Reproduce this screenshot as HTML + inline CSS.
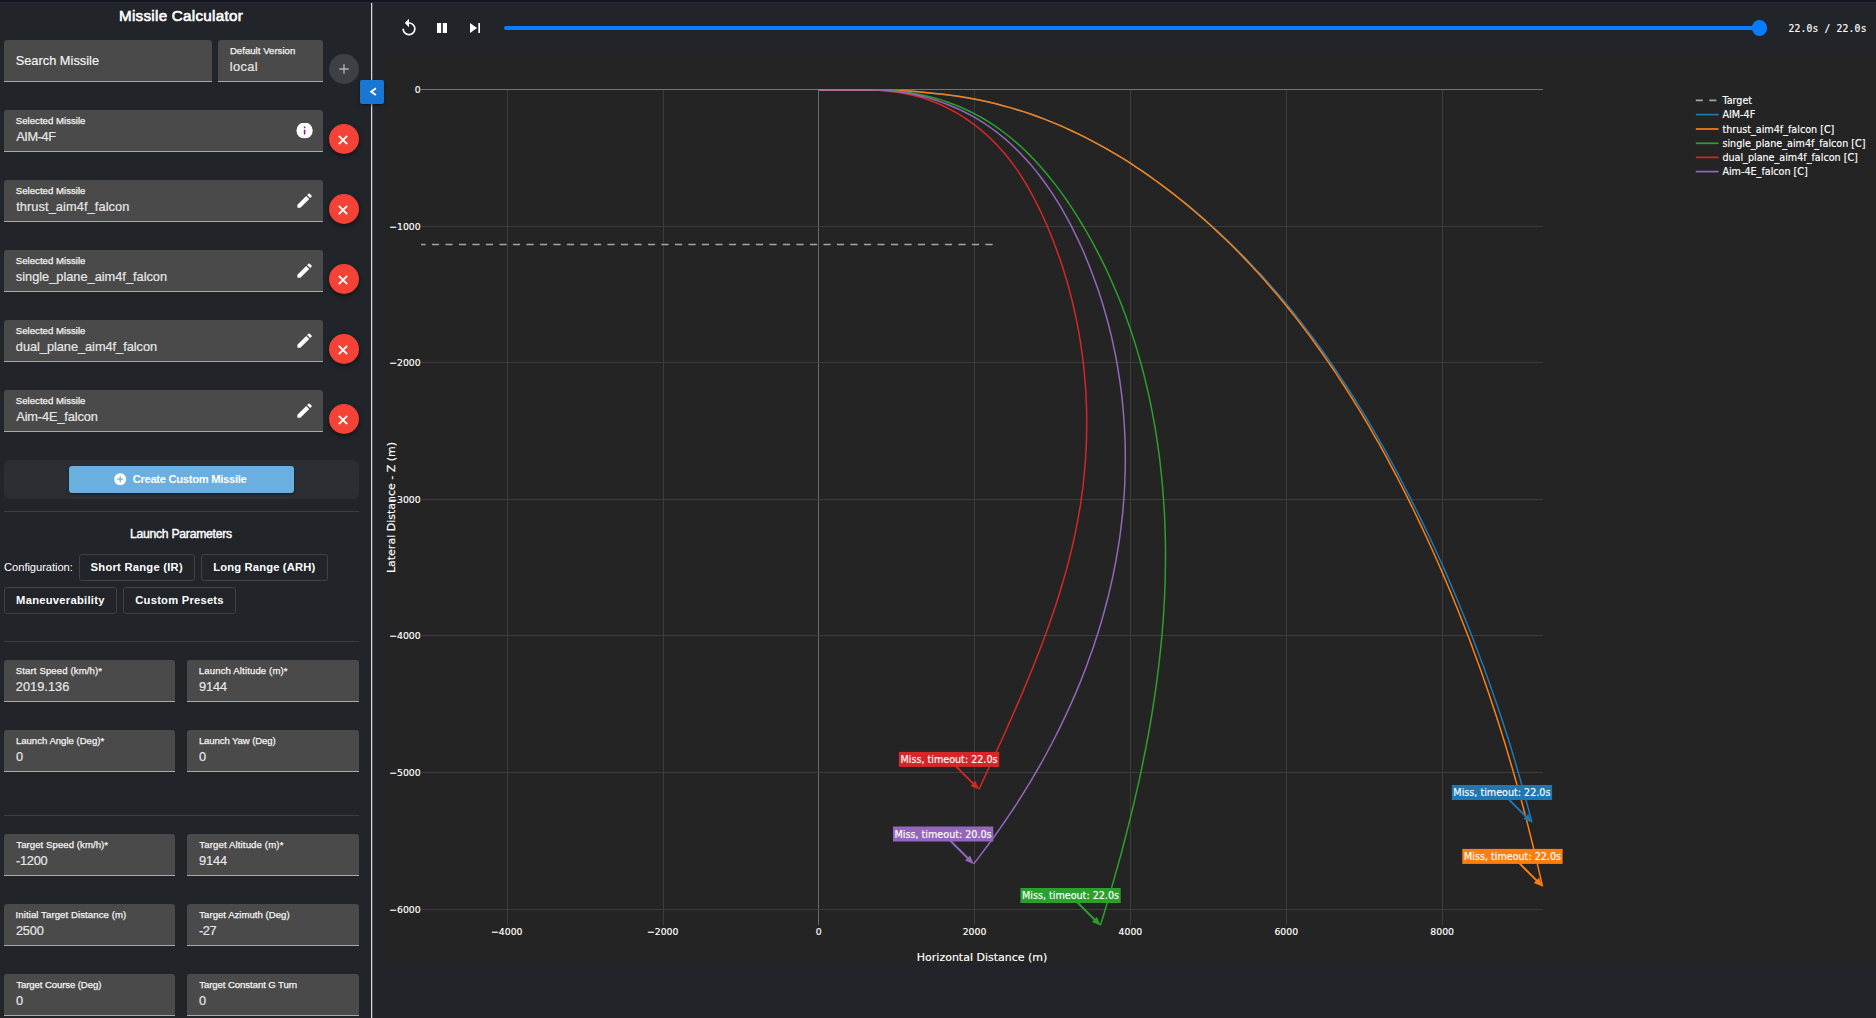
<!DOCTYPE html>
<html lang="en"><head><meta charset="utf-8"><title>Missile Calculator</title><style>
html,body{margin:0;padding:0;background:#212429;}
body{width:1876px;height:1018px;position:relative;overflow:hidden;font-family:'Liberation Sans', Arial, sans-serif;}
.b{position:absolute;display:block}
.t{position:absolute;white-space:pre;line-height:20px;height:20px}
.f{position:absolute;background:#4a4a4a;border-radius:3px 3px 0 0;box-sizing:border-box;border-bottom:1px solid #a9a9a9}
.fab{box-shadow:0 2px 4px rgba(0,0,0,.45)}
svg text{stroke:#fff;stroke-width:.15px}
</style></head><body>
<span class="t " id="t0" style="left:118.97px;top:6.33px;font-size:15.2px;color:#fff;font-weight:400;letter-spacing:0.283px;font-family:'Liberation Sans', Arial, sans-serif;-webkit-text-stroke:0.6px #fff;">Missile Calculator</span>
<div class="f" style="left:4px;top:40px;width:208px;height:42px"></div>
<span class="t " id="t1" style="left:15.65px;top:50.86px;font-size:12.8px;color:#f6f6f6;font-weight:400;letter-spacing:0.018px;font-family:'Liberation Sans', Arial, sans-serif;-webkit-text-stroke:0.15px #f6f6f6;">Search Missile</span>
<div class="f" style="left:218px;top:40px;width:105px;height:42px"></div>
<span class="t lab" id="t2" style="left:229.91px;top:40.67px;font-size:9.6px;color:#f4f4f4;font-weight:400;letter-spacing:0.023px;font-family:'Liberation Sans', Arial, sans-serif;-webkit-text-stroke:0.25px #f4f4f4;">Default Version</span>
<span class="t " id="t3" style="left:229.64px;top:56.66px;font-size:12.8px;color:#e6e6e6;font-weight:400;letter-spacing:0.408px;font-family:'Liberation Sans', Arial, sans-serif;-webkit-text-stroke:0.2px #e6e6e6;">local</span>
<div class="b" style="left:328.8px;top:54px;width:30px;height:30px;border-radius:50%;background:#3d4044"></div>
<svg class="b" style="left:335.8px;top:61.05px" width="16" height="16" viewBox="0 0 24 24"><path fill="#b2b4b6" d="M19 13h-6v6h-2v-6H5v-2h6V5h2v6h6v2z"/></svg>
<div class="f" style="left:4px;top:110px;width:319px;height:42px"></div>
<span class="t lab" id="t4" style="left:15.82px;top:110.67px;font-size:9.6px;color:#f4f4f4;font-weight:400;letter-spacing:0.019px;font-family:'Liberation Sans', Arial, sans-serif;-webkit-text-stroke:0.25px #f4f4f4;">Selected Missile</span>
<span class="t " id="t5" style="left:16.24px;top:126.66px;font-size:12.8px;color:#e6e6e6;font-weight:400;letter-spacing:-0.443px;font-family:'Liberation Sans', Arial, sans-serif;-webkit-text-stroke:0.2px #e6e6e6;">AIM-4F</span>
<svg class="b" style="left:295.1px;top:121.4px" width="19.2" height="19.2" viewBox="0 0 24 24"><clipPath id="ic"><rect x="0" y="2.45" width="24" height="19.1"/></clipPath><circle cx="12" cy="12" r="10.2" fill="#fff" clip-path="url(#ic)"/><path fill="#86208f" d="M11 7h2v2h-2zM11 11h2v6h-2z"/></svg>
<div class="b fab" style="left:328.9px;top:123.9px;width:30.2px;height:30.2px;border-radius:50%;background:#f44336"></div>
<svg class="b" style="left:333.4px;top:129.5px" width="20" height="20" viewBox="-10 -10 20 20"><path fill="none" stroke="#fff" stroke-width="1.85" d="M-4.15,-4.05L4.15,4.05M4.15,-4.05L-4.15,4.05"/></svg>
<div class="f" style="left:4px;top:180px;width:319px;height:42px"></div>
<span class="t lab" id="t6" style="left:15.82px;top:180.67px;font-size:9.6px;color:#f4f4f4;font-weight:400;letter-spacing:0.019px;font-family:'Liberation Sans', Arial, sans-serif;-webkit-text-stroke:0.25px #f4f4f4;">Selected Missile</span>
<span class="t " id="t7" style="left:16.15px;top:196.66px;font-size:12.8px;color:#e6e6e6;font-weight:400;letter-spacing:0.086px;font-family:'Liberation Sans', Arial, sans-serif;-webkit-text-stroke:0.2px #e6e6e6;">thrust_aim4f_falcon</span>
<svg class="b" style="left:294.95px;top:191.3px" width="19.2" height="19.2" viewBox="0 0 24 24"><path fill="#fff" d="M3 17.25V21h3.75L17.81 9.94l-3.75-3.75L3 17.25zM20.71 7.04c.39-.39.39-1.02 0-1.41l-2.34-2.34c-.39-.39-1.02-.39-1.41 0l-1.83 1.83 3.75 3.75 1.83-1.83z"/></svg>
<div class="b fab" style="left:328.9px;top:193.9px;width:30.2px;height:30.2px;border-radius:50%;background:#f44336"></div>
<svg class="b" style="left:333.4px;top:199.5px" width="20" height="20" viewBox="-10 -10 20 20"><path fill="none" stroke="#fff" stroke-width="1.85" d="M-4.15,-4.05L4.15,4.05M4.15,-4.05L-4.15,4.05"/></svg>
<div class="f" style="left:4px;top:250px;width:319px;height:42px"></div>
<span class="t lab" id="t8" style="left:15.82px;top:250.67px;font-size:9.6px;color:#f4f4f4;font-weight:400;letter-spacing:0.019px;font-family:'Liberation Sans', Arial, sans-serif;-webkit-text-stroke:0.25px #f4f4f4;">Selected Missile</span>
<span class="t " id="t9" style="left:15.86px;top:266.66px;font-size:12.8px;color:#e6e6e6;font-weight:400;letter-spacing:-0.014px;font-family:'Liberation Sans', Arial, sans-serif;-webkit-text-stroke:0.2px #e6e6e6;">single_plane_aim4f_falcon</span>
<svg class="b" style="left:294.95px;top:261.3px" width="19.2" height="19.2" viewBox="0 0 24 24"><path fill="#fff" d="M3 17.25V21h3.75L17.81 9.94l-3.75-3.75L3 17.25zM20.71 7.04c.39-.39.39-1.02 0-1.41l-2.34-2.34c-.39-.39-1.02-.39-1.41 0l-1.83 1.83 3.75 3.75 1.83-1.83z"/></svg>
<div class="b fab" style="left:328.9px;top:263.9px;width:30.2px;height:30.2px;border-radius:50%;background:#f44336"></div>
<svg class="b" style="left:333.4px;top:269.5px" width="20" height="20" viewBox="-10 -10 20 20"><path fill="none" stroke="#fff" stroke-width="1.85" d="M-4.15,-4.05L4.15,4.05M4.15,-4.05L-4.15,4.05"/></svg>
<div class="f" style="left:4px;top:320px;width:319px;height:42px"></div>
<span class="t lab" id="t10" style="left:15.82px;top:320.67px;font-size:9.6px;color:#f4f4f4;font-weight:400;letter-spacing:0.019px;font-family:'Liberation Sans', Arial, sans-serif;-webkit-text-stroke:0.25px #f4f4f4;">Selected Missile</span>
<span class="t " id="t11" style="left:15.85px;top:336.66px;font-size:12.8px;color:#e6e6e6;font-weight:400;letter-spacing:-0.049px;font-family:'Liberation Sans', Arial, sans-serif;-webkit-text-stroke:0.2px #e6e6e6;">dual_plane_aim4f_falcon</span>
<svg class="b" style="left:294.95px;top:331.3px" width="19.2" height="19.2" viewBox="0 0 24 24"><path fill="#fff" d="M3 17.25V21h3.75L17.81 9.94l-3.75-3.75L3 17.25zM20.71 7.04c.39-.39.39-1.02 0-1.41l-2.34-2.34c-.39-.39-1.02-.39-1.41 0l-1.83 1.83 3.75 3.75 1.83-1.83z"/></svg>
<div class="b fab" style="left:328.9px;top:333.9px;width:30.2px;height:30.2px;border-radius:50%;background:#f44336"></div>
<svg class="b" style="left:333.4px;top:339.5px" width="20" height="20" viewBox="-10 -10 20 20"><path fill="none" stroke="#fff" stroke-width="1.85" d="M-4.15,-4.05L4.15,4.05M4.15,-4.05L-4.15,4.05"/></svg>
<div class="f" style="left:4px;top:390px;width:319px;height:42px"></div>
<span class="t lab" id="t12" style="left:15.82px;top:390.67px;font-size:9.6px;color:#f4f4f4;font-weight:400;letter-spacing:0.019px;font-family:'Liberation Sans', Arial, sans-serif;-webkit-text-stroke:0.25px #f4f4f4;">Selected Missile</span>
<span class="t " id="t13" style="left:16.24px;top:406.66px;font-size:12.8px;color:#e6e6e6;font-weight:400;letter-spacing:-0.133px;font-family:'Liberation Sans', Arial, sans-serif;-webkit-text-stroke:0.2px #e6e6e6;">Aim-4E_falcon</span>
<svg class="b" style="left:294.95px;top:401.3px" width="19.2" height="19.2" viewBox="0 0 24 24"><path fill="#fff" d="M3 17.25V21h3.75L17.81 9.94l-3.75-3.75L3 17.25zM20.71 7.04c.39-.39.39-1.02 0-1.41l-2.34-2.34c-.39-.39-1.02-.39-1.41 0l-1.83 1.83 3.75 3.75 1.83-1.83z"/></svg>
<div class="b fab" style="left:328.9px;top:403.9px;width:30.2px;height:30.2px;border-radius:50%;background:#f44336"></div>
<svg class="b" style="left:333.4px;top:409.5px" width="20" height="20" viewBox="-10 -10 20 20"><path fill="none" stroke="#fff" stroke-width="1.85" d="M-4.15,-4.05L4.15,4.05M4.15,-4.05L-4.15,4.05"/></svg>
<div class="b" style="left:4px;top:460px;width:355px;height:39px;background:#2b2e33;border-radius:6px"></div>
<div class="b" style="left:69px;top:466px;width:225px;height:27px;background:#6aafe0;border-radius:3px;box-shadow:0 1px 3px rgba(0,0,0,.4)"></div>
<svg class="b" style="left:112.8px;top:471.8px" width="14.4" height="14.4" viewBox="0 0 24 24"><path fill="#fff" d="M12 2C6.48 2 2 6.48 2 12s4.480 10 10 10 10-4.480 10-10S17.520 2 12 2zm5 11h-4v4h-2v-4H7v-2h4V7h2v4h4v2z"/></svg>
<span class="t " id="t14" style="left:132.65px;top:468.72px;font-size:11.2px;color:#fff;font-weight:700;letter-spacing:-0.295px;font-family:'Liberation Sans', Arial, sans-serif;">Create Custom Missile</span>
<div class="b" style="left:4px;top:511px;width:355px;height:1px;background:#3a3d42"></div>
<span class="t " id="t15" style="left:129.90px;top:523.77px;font-size:12.2px;color:#fff;font-weight:400;letter-spacing:-0.258px;font-family:'Liberation Sans', Arial, sans-serif;-webkit-text-stroke:0.4px #fff;">Launch Parameters</span>
<span class="t " id="t16" style="left:4.10px;top:557.32px;font-size:11.2px;color:#fff;font-weight:400;letter-spacing:-0.074px;font-family:'Liberation Sans', Arial, sans-serif;">Configuration:</span>
<div class="b" style="left:79px;top:554px;width:116px;height:27px;border:1px solid #3f4247;border-radius:3px;box-sizing:border-box"></div>
<span class="t " id="t17" style="left:90.58px;top:557.32px;font-size:11.2px;color:#fff;font-weight:700;letter-spacing:0.254px;font-family:'Liberation Sans', Arial, sans-serif;">Short Range (IR)</span>
<div class="b" style="left:201px;top:554px;width:127px;height:27px;border:1px solid #3f4247;border-radius:3px;box-sizing:border-box"></div>
<span class="t " id="t18" style="left:213.34px;top:557.32px;font-size:11.2px;color:#fff;font-weight:700;letter-spacing:0.157px;font-family:'Liberation Sans', Arial, sans-serif;">Long Range (ARH)</span>
<div class="b" style="left:4px;top:587px;width:113px;height:27px;border:1px solid #3f4247;border-radius:3px;box-sizing:border-box"></div>
<span class="t " id="t19" style="left:16.08px;top:590.22px;font-size:11.2px;color:#fff;font-weight:700;letter-spacing:0.267px;font-family:'Liberation Sans', Arial, sans-serif;">Maneuverability</span>
<div class="b" style="left:123px;top:587px;width:113px;height:27px;border:1px solid #3f4247;border-radius:3px;box-sizing:border-box"></div>
<span class="t " id="t20" style="left:135.29px;top:590.22px;font-size:11.2px;color:#fff;font-weight:700;letter-spacing:0.237px;font-family:'Liberation Sans', Arial, sans-serif;">Custom Presets</span>
<div class="b" style="left:4px;top:641px;width:355px;height:1px;background:#3a3d42"></div>
<div class="f" style="left:4px;top:660px;width:171px;height:42px"></div>
<span class="t lab" id="t21" style="left:15.83px;top:660.67px;font-size:9.6px;color:#f4f4f4;font-weight:400;letter-spacing:0.110px;font-family:'Liberation Sans', Arial, sans-serif;-webkit-text-stroke:0.25px #f4f4f4;">Start Speed (km/h)*</span>
<span class="t " id="t22" style="left:15.85px;top:676.66px;font-size:12.8px;color:#e6e6e6;font-weight:400;letter-spacing:0.015px;font-family:'Liberation Sans', Arial, sans-serif;-webkit-text-stroke:0.2px #e6e6e6;">2019.136</span>
<div class="f" style="left:187px;top:660px;width:172px;height:42px"></div>
<span class="t lab" id="t23" style="left:198.83px;top:660.67px;font-size:9.6px;color:#f4f4f4;font-weight:400;letter-spacing:0.125px;font-family:'Liberation Sans', Arial, sans-serif;-webkit-text-stroke:0.25px #f4f4f4;">Launch Altitude (m)*</span>
<span class="t " id="t24" style="left:198.89px;top:676.66px;font-size:12.8px;color:#e6e6e6;font-weight:400;letter-spacing:-0.035px;font-family:'Liberation Sans', Arial, sans-serif;-webkit-text-stroke:0.2px #e6e6e6;">9144</span>
<div class="f" style="left:4px;top:730px;width:171px;height:42px"></div>
<span class="t lab" id="t25" style="left:15.88px;top:730.67px;font-size:9.6px;color:#f4f4f4;font-weight:400;letter-spacing:-0.014px;font-family:'Liberation Sans', Arial, sans-serif;-webkit-text-stroke:0.25px #f4f4f4;">Launch Angle (Deg)*</span>
<span class="t " id="t26" style="left:15.99px;top:746.66px;font-size:12.8px;color:#e6e6e6;font-weight:400;letter-spacing:-5.376px;font-family:'Liberation Sans', Arial, sans-serif;-webkit-text-stroke:0.2px #e6e6e6;">0</span>
<div class="f" style="left:187px;top:730px;width:172px;height:42px"></div>
<span class="t lab" id="t27" style="left:198.88px;top:730.67px;font-size:9.6px;color:#f4f4f4;font-weight:400;letter-spacing:-0.119px;font-family:'Liberation Sans', Arial, sans-serif;-webkit-text-stroke:0.25px #f4f4f4;">Launch Yaw (Deg)</span>
<span class="t " id="t28" style="left:198.99px;top:746.66px;font-size:12.8px;color:#e6e6e6;font-weight:400;letter-spacing:-5.376px;font-family:'Liberation Sans', Arial, sans-serif;-webkit-text-stroke:0.2px #e6e6e6;">0</span>
<div class="f" style="left:4px;top:834px;width:171px;height:42px"></div>
<span class="t lab" id="t29" style="left:16.29px;top:834.67px;font-size:9.6px;color:#f4f4f4;font-weight:400;letter-spacing:0.062px;font-family:'Liberation Sans', Arial, sans-serif;-webkit-text-stroke:0.25px #f4f4f4;">Target Speed (km/h)*</span>
<span class="t " id="t30" style="left:15.89px;top:850.66px;font-size:12.8px;color:#e6e6e6;font-weight:400;letter-spacing:-0.223px;font-family:'Liberation Sans', Arial, sans-serif;-webkit-text-stroke:0.2px #e6e6e6;">-1200</span>
<div class="f" style="left:187px;top:834px;width:172px;height:42px"></div>
<span class="t lab" id="t31" style="left:199.29px;top:834.67px;font-size:9.6px;color:#f4f4f4;font-weight:400;letter-spacing:0.132px;font-family:'Liberation Sans', Arial, sans-serif;-webkit-text-stroke:0.25px #f4f4f4;">Target Altitude (m)*</span>
<span class="t " id="t32" style="left:198.89px;top:850.66px;font-size:12.8px;color:#e6e6e6;font-weight:400;letter-spacing:-0.097px;font-family:'Liberation Sans', Arial, sans-serif;-webkit-text-stroke:0.2px #e6e6e6;">9144</span>
<div class="f" style="left:4px;top:904px;width:171px;height:42px"></div>
<span class="t lab" id="t33" style="left:15.60px;top:904.67px;font-size:9.6px;color:#f4f4f4;font-weight:400;letter-spacing:0.080px;font-family:'Liberation Sans', Arial, sans-serif;-webkit-text-stroke:0.25px #f4f4f4;">Initial Target Distance (m)</span>
<span class="t " id="t34" style="left:15.89px;top:920.66px;font-size:12.8px;color:#e6e6e6;font-weight:400;letter-spacing:-0.152px;font-family:'Liberation Sans', Arial, sans-serif;-webkit-text-stroke:0.2px #e6e6e6;">2500</span>
<div class="f" style="left:187px;top:904px;width:172px;height:42px"></div>
<span class="t lab" id="t35" style="left:199.29px;top:904.67px;font-size:9.6px;color:#f4f4f4;font-weight:400;letter-spacing:0.011px;font-family:'Liberation Sans', Arial, sans-serif;-webkit-text-stroke:0.25px #f4f4f4;">Target Azimuth (Deg)</span>
<span class="t " id="t36" style="left:198.90px;top:920.66px;font-size:12.8px;color:#e6e6e6;font-weight:400;letter-spacing:-0.446px;font-family:'Liberation Sans', Arial, sans-serif;-webkit-text-stroke:0.2px #e6e6e6;">-27</span>
<div class="f" style="left:4px;top:974px;width:171px;height:42px"></div>
<span class="t lab" id="t37" style="left:16.29px;top:974.67px;font-size:9.6px;color:#f4f4f4;font-weight:400;letter-spacing:-0.103px;font-family:'Liberation Sans', Arial, sans-serif;-webkit-text-stroke:0.25px #f4f4f4;">Target Course (Deg)</span>
<span class="t " id="t38" style="left:15.99px;top:990.66px;font-size:12.8px;color:#e6e6e6;font-weight:400;letter-spacing:-5.376px;font-family:'Liberation Sans', Arial, sans-serif;-webkit-text-stroke:0.2px #e6e6e6;">0</span>
<div class="f" style="left:187px;top:974px;width:172px;height:42px"></div>
<span class="t lab" id="t39" style="left:199.29px;top:974.67px;font-size:9.6px;color:#f4f4f4;font-weight:400;letter-spacing:-0.087px;font-family:'Liberation Sans', Arial, sans-serif;-webkit-text-stroke:0.25px #f4f4f4;">Target Constant G Turn</span>
<span class="t " id="t40" style="left:198.99px;top:990.66px;font-size:12.8px;color:#e6e6e6;font-weight:400;letter-spacing:-5.376px;font-family:'Liberation Sans', Arial, sans-serif;-webkit-text-stroke:0.2px #e6e6e6;">0</span>
<div class="b" style="left:4px;top:814.5px;width:355px;height:1px;background:#3a3d42"></div>
<div class="b" style="left:371px;top:3px;width:1px;height:1015px;background:#d6d6d6"></div>
<div class="b" style="left:372px;top:3px;width:1px;height:1015px;background:#505256"></div>
<div class="b" style="left:0px;top:0px;width:1876px;height:2px;background:#121420"></div>
<div class="b" style="left:0px;top:2px;width:1876px;height:1px;background:#262935"></div>
<svg class="b" style="left:399px;top:18px" width="20" height="20" viewBox="0 0 24 24"><path fill="#fff" d="M12 5V1L7 6l5 5V7c3.31 0 6 2.69 6 6s-2.69 6-6 6-6-2.69-6-6H4c0 4.42 3.58 8 8 8s8-3.58 8-8-3.58-8-8-8z"/></svg>
<svg class="b" style="left:432px;top:18px" width="20" height="20" viewBox="0 0 24 24"><path fill="#fff" d="M6 6h5v12H6zM13 6h5v12h-5z"/></svg>
<svg class="b" style="left:465px;top:18px" width="20" height="20" viewBox="0 0 24 24"><path fill="#fff" d="M6 18l8.5-6L6 6v12zM16 6v12h2V6h-2z"/></svg>
<div class="b" style="left:504px;top:25.8px;width:1256px;height:4.4px;background:#0a7cff;border-radius:2.2px"></div>
<div class="b" style="left:1752px;top:20.4px;width:15.2px;height:15.2px;background:#0a7cff;border-radius:50%"></div>
<span class="t " id="t41" style="left:1788.38px;top:18.64px;font-size:9.7px;color:#fff;font-weight:400;letter-spacing:0.189px;font-family:'DejaVu Sans Mono', 'Liberation Mono', monospace;-webkit-text-stroke:0.15px #fff;">22.0s / 22.0s</span>
<svg class="b" style="left:384px;top:51px" width="1492" height="912" viewBox="384 51 1492 912" font-family='"DejaVu Sans", "Liberation Sans", sans-serif'>
<rect x="384" y="51.5" width="1492" height="911.5" fill="#242424"/>
<g shape-rendering="crispEdges"><rect x="507" y="89" width="1" height="836" fill="#3c3c3c"/><rect x="663" y="89" width="1" height="836" fill="#3c3c3c"/><rect x="818" y="89" width="1" height="836" fill="#6b6b6b"/><rect x="974" y="89" width="1" height="836" fill="#3c3c3c"/><rect x="1130" y="89" width="1" height="836" fill="#3c3c3c"/><rect x="1286" y="89" width="1" height="836" fill="#3c3c3c"/><rect x="1442" y="89" width="1" height="836" fill="#3c3c3c"/><rect x="421" y="89" width="1122" height="1" fill="#747474"/><rect x="421" y="226" width="1122" height="1" fill="#3c3c3c"/><rect x="421" y="362" width="1122" height="1" fill="#3c3c3c"/><rect x="421" y="499" width="1122" height="1" fill="#3c3c3c"/><rect x="421" y="635" width="1122" height="1" fill="#3c3c3c"/><rect x="421" y="772" width="1122" height="1" fill="#3c3c3c"/><rect x="421" y="909" width="1122" height="1" fill="#3c3c3c"/></g>
<text x="506.8" y="934.6" font-size="9.3" fill="#fff" text-anchor="middle">−4000</text>
<text x="662.7" y="934.6" font-size="9.3" fill="#fff" text-anchor="middle">−2000</text>
<text x="818.6" y="934.6" font-size="9.3" fill="#fff" text-anchor="middle">0</text>
<text x="974.5" y="934.6" font-size="9.3" fill="#fff" text-anchor="middle">2000</text>
<text x="1130.4" y="934.6" font-size="9.3" fill="#fff" text-anchor="middle">4000</text>
<text x="1286.3" y="934.6" font-size="9.3" fill="#fff" text-anchor="middle">6000</text>
<text x="1442.2" y="934.6" font-size="9.3" fill="#fff" text-anchor="middle">8000</text>
<text x="420.7" y="93.0" font-size="9.3" fill="#fff" text-anchor="end">0</text>
<text x="420.7" y="230.0" font-size="9.3" fill="#fff" text-anchor="end">−1000</text>
<text x="420.7" y="366.0" font-size="9.3" fill="#fff" text-anchor="end">−2000</text>
<text x="420.7" y="503.0" font-size="9.3" fill="#fff" text-anchor="end">−3000</text>
<text x="420.7" y="639.0" font-size="9.3" fill="#fff" text-anchor="end">−4000</text>
<text x="420.7" y="776.0" font-size="9.3" fill="#fff" text-anchor="end">−5000</text>
<text x="420.7" y="913.0" font-size="9.3" fill="#fff" text-anchor="end">−6000</text>
<text x="982.1" y="960.6" font-size="11" fill="#fff" text-anchor="middle">Horizontal Distance (m)</text>
<text transform="translate(394.8,507.5) rotate(-90)" font-size="11" fill="#fff" text-anchor="middle">Lateral Distance - Z (m)</text>
<clipPath id="cp"><rect x="421" y="88" width="1123" height="838"/></clipPath>
<g clip-path="url(#cp)" fill="none" stroke-width="1.5" stroke-linejoin="round">
<path d="M404.9,244.6H993" stroke="#a4a4a4" stroke-dasharray="7.2 6.3"/>
<path d="M819.0,90.2 L826.4,90.0 L833.7,90.0 L841.1,90.0 L848.5,90.0 L855.9,90.0 L863.4,90.0 L870.8,90.0 L878.2,90.0 L885.7,90.1 L893.1,90.4 L900.6,90.7 L908.0,91.1 L915.4,91.6 L922.8,92.2 L930.2,92.9 L937.6,93.7 L945.0,94.5 L952.4,95.5 L959.7,96.6 L967.0,97.8 L974.3,99.1 L981.5,100.6 L988.7,102.1 L995.9,103.8 L1003.1,105.7 L1010.2,107.6 L1017.2,109.7 L1024.2,111.9 L1031.2,114.3 L1038.1,116.8 L1045.0,119.4 L1051.9,122.1 L1058.7,124.9 L1065.4,127.9 L1072.1,131.0 L1078.8,134.1 L1085.4,137.4 L1092.0,140.8 L1098.5,144.3 L1105.0,147.9 L1111.4,151.6 L1117.8,155.4 L1124.1,159.2 L1130.4,163.2 L1136.6,167.3 L1142.8,171.4 L1148.9,175.7 L1155.0,180.0 L1161.0,184.4 L1166.9,188.8 L1172.9,193.4 L1178.7,198.0 L1184.5,202.7 L1190.3,207.4 L1196.1,212.2 L1201.8,217.1 L1207.4,222.0 L1213.0,227.0 L1218.5,232.1 L1224.0,237.2 L1229.4,242.3 L1234.7,247.5 L1240.0,252.8 L1245.2,258.1 L1250.4,263.5 L1255.5,268.9 L1260.6,274.3 L1265.6,279.8 L1270.5,285.4 L1275.4,291.0 L1280.3,296.6 L1285.0,302.3 L1289.7,308.0 L1294.4,313.8 L1299.0,319.6 L1303.5,325.5 L1308.0,331.4 L1312.5,337.3 L1316.9,343.3 L1321.3,349.3 L1325.6,355.3 L1329.8,361.4 L1334.0,367.5 L1338.2,373.6 L1342.3,379.8 L1346.4,386.0 L1350.4,392.3 L1354.4,398.5 L1358.3,404.8 L1362.2,411.2 L1366.1,417.5 L1369.9,423.9 L1373.6,430.3 L1377.4,436.8 L1381.0,443.2 L1384.7,449.7 L1388.3,456.2 L1391.9,462.8 L1395.4,469.3 L1398.9,475.9 L1402.3,482.5 L1405.7,489.1 L1409.1,495.7 L1412.4,502.4 L1415.8,509.0 L1419.1,515.7 L1422.4,522.4 L1425.7,529.1 L1428.9,535.8 L1432.1,542.5 L1435.2,549.3 L1438.3,556.0 L1441.4,562.8 L1444.4,569.6 L1447.4,576.4 L1450.3,583.2 L1453.2,590.0 L1456.1,596.8 L1458.9,603.7 L1461.7,610.5 L1464.5,617.4 L1467.3,624.3 L1470.0,631.2 L1472.7,638.1 L1475.3,645.0 L1478.0,651.9 L1480.6,658.9 L1483.2,665.8 L1485.7,672.8 L1488.2,679.8 L1490.7,686.7 L1493.1,693.7 L1495.6,700.7 L1498.0,707.8 L1500.4,714.8 L1502.7,721.8 L1505.0,728.9 L1507.3,735.9 L1509.6,743.0 L1511.7,750.1 L1513.8,757.2 L1515.9,764.3 L1518.0,771.4 L1520.0,778.5 L1522.0,785.6 L1524.0,792.8 L1526.0,799.9 L1527.9,807.0 L1529.8,814.2 L1531.7,821.4 L1531.9,822.2" stroke="#1f77b4"/>
<path d="M819.0,90.2 L826.4,90.0 L833.7,90.0 L841.1,90.0 L848.5,90.0 L855.9,90.0 L863.4,90.0 L870.8,90.0 L878.2,90.0 L885.7,90.1 L893.1,90.4 L900.5,90.7 L908.0,91.1 L915.4,91.6 L922.8,92.2 L930.2,92.9 L937.6,93.7 L945.0,94.5 L952.4,95.5 L959.7,96.6 L967.0,97.8 L974.3,99.1 L981.5,100.6 L988.7,102.1 L995.9,103.8 L1003.0,105.7 L1010.1,107.6 L1017.2,109.7 L1024.2,111.9 L1031.2,114.3 L1038.1,116.8 L1045.0,119.4 L1051.8,122.1 L1058.6,124.9 L1065.4,127.9 L1072.1,131.0 L1078.7,134.1 L1085.3,137.4 L1091.9,140.8 L1098.4,144.3 L1104.9,147.9 L1111.3,151.6 L1117.7,155.4 L1124.0,159.2 L1130.3,163.2 L1136.5,167.3 L1142.6,171.4 L1148.7,175.7 L1154.8,180.0 L1160.8,184.4 L1166.8,188.8 L1172.7,193.4 L1178.5,198.0 L1184.3,202.7 L1190.0,207.4 L1195.7,212.2 L1201.3,217.1 L1206.9,222.0 L1212.4,227.0 L1217.8,232.1 L1223.2,237.2 L1228.5,242.3 L1233.8,247.5 L1239.0,252.8 L1244.2,258.1 L1249.3,263.5 L1254.3,268.9 L1259.3,274.3 L1264.2,279.8 L1269.1,285.4 L1273.9,291.0 L1278.7,296.6 L1283.4,302.3 L1288.1,308.0 L1292.7,313.8 L1297.3,319.6 L1301.8,325.5 L1306.2,331.4 L1310.7,337.3 L1315.0,343.3 L1319.3,349.3 L1323.6,355.3 L1327.8,361.4 L1332.0,367.5 L1336.2,373.6 L1340.2,379.8 L1344.3,386.0 L1348.3,392.3 L1352.2,398.5 L1356.1,404.8 L1360.0,411.2 L1363.8,417.5 L1367.6,423.9 L1371.3,430.3 L1375.0,436.8 L1378.7,443.2 L1382.3,449.7 L1385.9,456.2 L1389.4,462.8 L1392.9,469.3 L1396.4,475.9 L1399.8,482.5 L1403.2,489.1 L1406.5,495.7 L1409.8,502.4 L1413.1,509.0 L1416.3,515.7 L1419.5,522.4 L1422.7,529.1 L1425.8,535.8 L1428.9,542.5 L1432.0,549.3 L1435.0,556.0 L1438.0,562.8 L1441.0,569.6 L1443.9,576.4 L1446.8,583.2 L1449.7,590.0 L1452.5,596.8 L1455.3,603.7 L1458.1,610.5 L1460.8,617.4 L1463.5,624.3 L1466.2,631.2 L1468.9,638.1 L1471.5,645.0 L1474.0,651.9 L1476.6,658.9 L1479.1,665.8 L1481.6,672.8 L1484.0,679.8 L1486.5,686.7 L1488.9,693.7 L1491.2,700.7 L1493.5,707.8 L1495.9,714.8 L1498.1,721.8 L1500.4,728.9 L1502.6,735.9 L1504.8,743.0 L1506.9,750.1 L1509.0,757.2 L1511.1,764.3 L1513.2,771.4 L1515.2,778.5 L1517.2,785.6 L1519.2,792.8 L1521.2,799.9 L1523.1,807.0 L1525.0,814.2 L1526.9,821.4 L1528.7,828.6 L1530.5,835.8 L1532.3,843.0 L1534.1,850.2 L1535.8,857.4 L1537.5,864.6 L1539.2,871.8 L1540.9,879.1 L1542.5,886.3" stroke="#ff7f0e"/>
<path d="M819.0,90.1 L825.5,90.1 L832.0,90.1 L838.5,90.1 L845.1,90.0 L851.6,90.0 L858.1,90.0 L864.7,90.0 L871.2,90.0 L877.7,90.0 L884.3,90.1 L890.8,90.5 L897.3,91.1 L903.8,91.9 L910.3,92.8 L916.8,93.9 L923.3,95.3 L929.7,96.8 L936.1,98.5 L942.4,100.4 L948.6,102.5 L954.7,104.8 L960.8,107.3 L966.8,110.0 L972.6,112.8 L978.4,115.8 L984.0,119.0 L989.5,122.4 L994.9,125.9 L1000.2,129.6 L1005.3,133.5 L1010.4,137.5 L1015.3,141.6 L1020.1,145.9 L1024.9,150.3 L1029.5,154.9 L1034.0,159.5 L1038.4,164.3 L1042.8,169.2 L1047.0,174.2 L1051.1,179.2 L1055.2,184.4 L1059.1,189.6 L1063.0,194.9 L1066.8,200.3 L1070.5,205.8 L1074.1,211.3 L1077.6,216.9 L1081.0,222.5 L1084.4,228.1 L1087.7,233.8 L1090.9,239.5 L1094.1,245.3 L1097.1,251.1 L1100.1,256.9 L1103.0,262.7 L1105.9,268.6 L1108.6,274.5 L1111.3,280.5 L1113.9,286.5 L1116.5,292.5 L1119.0,298.5 L1121.4,304.5 L1123.7,310.6 L1126.0,316.7 L1128.2,322.9 L1130.3,329.0 L1132.4,335.2 L1134.4,341.4 L1136.3,347.6 L1138.2,353.9 L1140.0,360.2 L1141.7,366.4 L1143.4,372.7 L1145.0,379.1 L1146.5,385.4 L1148.0,391.8 L1149.4,398.1 L1150.7,404.5 L1152.0,410.9 L1153.2,417.4 L1154.4,423.8 L1155.5,430.2 L1156.5,436.7 L1157.5,443.2 L1158.4,449.6 L1159.3,456.1 L1160.1,462.6 L1160.8,469.1 L1161.5,475.6 L1162.1,482.1 L1162.7,488.7 L1163.2,495.2 L1163.7,501.7 L1164.1,508.2 L1164.5,514.8 L1164.8,521.3 L1165.0,527.9 L1165.2,534.4 L1165.4,540.9 L1165.5,547.5 L1165.5,554.0 L1165.5,560.6 L1165.4,567.1 L1165.3,573.6 L1165.2,580.1 L1165.0,586.7 L1164.7,593.2 L1164.4,599.7 L1164.0,606.2 L1163.7,612.7 L1163.2,619.2 L1162.7,625.7 L1162.2,632.2 L1161.6,638.7 L1161.0,645.1 L1160.3,651.6 L1159.6,658.1 L1158.9,664.5 L1158.1,671.0 L1157.3,677.5 L1156.4,683.9 L1155.5,690.4 L1154.6,696.8 L1153.6,703.2 L1152.6,709.7 L1151.6,716.1 L1150.5,722.5 L1149.4,728.9 L1148.2,735.3 L1147.0,741.7 L1145.8,748.1 L1144.5,754.5 L1143.2,760.9 L1141.9,767.3 L1140.6,773.7 L1139.2,780.1 L1137.8,786.4 L1136.3,792.8 L1134.9,799.2 L1133.4,805.5 L1131.8,811.9 L1130.3,818.2 L1128.7,824.5 L1127.1,830.9 L1125.5,837.2 L1123.8,843.5 L1122.2,849.8 L1120.5,856.2 L1118.7,862.5 L1117.0,868.8 L1115.2,875.0 L1113.5,881.3 L1111.7,887.6 L1109.8,893.9 L1108.0,900.2 L1106.1,906.4 L1104.3,912.7 L1102.4,918.9 L1100.4,925.2" stroke="#2ca02c"/>
<path d="M819.0,90.1 L824.5,90.1 L829.9,90.0 L835.4,90.0 L840.9,90.0 L846.5,90.0 L852.0,90.0 L857.5,90.0 L863.1,90.0 L868.6,90.0 L874.1,90.0 L879.6,90.3 L885.1,90.8 L890.6,91.4 L896.1,92.1 L901.5,93.0 L907.0,94.0 L912.3,95.2 L917.6,96.6 L922.9,98.1 L928.1,99.8 L933.3,101.7 L938.4,103.7 L943.4,106.0 L948.3,108.4 L953.2,111.0 L958.0,113.7 L962.7,116.6 L967.3,119.7 L971.8,122.9 L976.2,126.2 L980.5,129.7 L984.8,133.3 L988.9,137.0 L992.9,140.9 L996.8,144.8 L1000.5,148.9 L1004.2,153.1 L1007.7,157.3 L1011.1,161.7 L1014.4,166.1 L1017.6,170.6 L1020.6,175.2 L1023.6,179.8 L1026.4,184.5 L1029.2,189.3 L1031.8,194.1 L1034.4,199.0 L1036.9,203.9 L1039.3,208.8 L1041.7,213.8 L1044.0,218.8 L1046.2,223.8 L1048.4,228.9 L1050.5,234.0 L1052.5,239.1 L1054.5,244.2 L1056.5,249.4 L1058.3,254.5 L1060.2,259.8 L1061.9,265.0 L1063.6,270.2 L1065.2,275.5 L1066.8,280.8 L1068.3,286.1 L1069.7,291.4 L1071.1,296.8 L1072.5,302.1 L1073.7,307.5 L1074.9,312.9 L1076.1,318.3 L1077.2,323.7 L1078.2,329.2 L1079.2,334.6 L1080.1,340.1 L1081.0,345.5 L1081.7,351.0 L1082.5,356.5 L1083.2,362.0 L1083.8,367.5 L1084.3,373.0 L1084.8,378.5 L1085.3,384.0 L1085.7,389.5 L1086.0,395.1 L1086.2,400.6 L1086.5,406.1 L1086.6,411.7 L1086.7,417.2 L1086.7,422.7 L1086.7,428.2 L1086.6,433.8 L1086.5,439.3 L1086.3,444.8 L1086.0,450.3 L1085.7,455.8 L1085.4,461.3 L1084.9,466.8 L1084.4,472.3 L1083.9,477.8 L1083.3,483.3 L1082.7,488.8 L1081.9,494.2 L1081.2,499.7 L1080.4,505.1 L1079.5,510.5 L1078.5,515.9 L1077.6,521.3 L1076.5,526.7 L1075.4,532.1 L1074.3,537.4 L1073.1,542.8 L1071.9,548.1 L1070.6,553.4 L1069.2,558.8 L1067.9,564.1 L1066.5,569.4 L1065.0,574.6 L1063.5,579.9 L1061.9,585.2 L1060.4,590.4 L1058.7,595.7 L1057.1,600.9 L1055.4,606.2 L1053.6,611.4 L1051.9,616.6 L1050.1,621.8 L1048.2,627.0 L1046.4,632.2 L1044.5,637.3 L1042.6,642.5 L1040.6,647.7 L1038.6,652.8 L1036.6,657.9 L1034.6,663.1 L1032.6,668.2 L1030.5,673.3 L1028.4,678.4 L1026.3,683.5 L1024.1,688.6 L1022.0,693.7 L1019.8,698.8 L1017.6,703.9 L1015.4,709.0 L1013.2,714.0 L1011.0,719.1 L1008.7,724.1 L1006.5,729.2 L1004.2,734.2 L1002.0,739.2 L999.7,744.3 L997.4,749.3 L995.1,754.3 L992.8,759.3 L990.5,764.3 L988.2,769.3 L985.9,774.3 L983.6,779.3 L981.3,784.3 L979.0,789.3" stroke="#d62728"/>
<path d="M819.0,90.1 L825.2,90.1 L831.4,90.1 L837.6,90.0 L843.8,90.0 L850.1,90.0 L856.3,90.0 L862.5,90.0 L868.8,90.0 L875.0,90.0 L881.2,90.3 L887.5,90.7 L893.7,91.3 L899.9,92.0 L906.1,93.0 L912.3,94.1 L918.4,95.4 L924.5,96.9 L930.6,98.6 L936.6,100.5 L942.5,102.6 L948.4,104.8 L954.2,107.2 L959.9,109.7 L965.5,112.5 L971.0,115.4 L976.4,118.4 L981.7,121.6 L986.8,125.0 L991.8,128.5 L996.7,132.2 L1001.5,136.0 L1006.2,139.9 L1010.8,144.0 L1015.2,148.2 L1019.6,152.5 L1023.8,156.9 L1027.9,161.5 L1032.0,166.1 L1035.9,170.9 L1039.7,175.8 L1043.4,180.7 L1047.0,185.7 L1050.6,190.9 L1054.0,196.1 L1057.3,201.4 L1060.6,206.7 L1063.7,212.1 L1066.8,217.6 L1069.8,223.1 L1072.6,228.7 L1075.4,234.4 L1078.2,240.1 L1080.8,245.8 L1083.4,251.5 L1085.8,257.3 L1088.2,263.2 L1090.5,269.0 L1092.8,274.9 L1094.9,280.7 L1097.0,286.6 L1099.0,292.6 L1101.0,298.5 L1102.8,304.5 L1104.6,310.5 L1106.3,316.5 L1108.0,322.5 L1109.5,328.6 L1111.0,334.6 L1112.4,340.7 L1113.7,346.8 L1115.0,352.9 L1116.2,359.0 L1117.3,365.1 L1118.3,371.3 L1119.3,377.4 L1120.2,383.6 L1121.0,389.7 L1121.8,395.9 L1122.4,402.1 L1123.0,408.3 L1123.6,414.5 L1124.0,420.7 L1124.4,426.9 L1124.7,433.1 L1125.0,439.3 L1125.2,445.5 L1125.3,451.7 L1125.3,457.9 L1125.3,464.1 L1125.2,470.4 L1125.0,476.6 L1124.8,482.8 L1124.5,489.0 L1124.1,495.2 L1123.6,501.4 L1123.1,507.6 L1122.6,513.8 L1121.9,519.9 L1121.2,526.1 L1120.4,532.3 L1119.6,538.4 L1118.6,544.6 L1117.7,550.7 L1116.6,556.8 L1115.5,562.9 L1114.3,569.0 L1113.1,575.1 L1111.8,581.2 L1110.4,587.2 L1109.0,593.2 L1107.5,599.3 L1105.9,605.3 L1104.3,611.3 L1102.6,617.2 L1100.9,623.2 L1099.1,629.2 L1097.3,635.1 L1095.3,641.0 L1093.4,646.9 L1091.3,652.8 L1089.2,658.6 L1087.1,664.5 L1084.9,670.3 L1082.7,676.1 L1080.4,681.9 L1078.0,687.6 L1075.6,693.4 L1073.1,699.1 L1070.6,704.8 L1068.0,710.4 L1065.4,716.1 L1062.7,721.7 L1060.0,727.3 L1057.2,732.9 L1054.4,738.5 L1051.5,744.0 L1048.6,749.5 L1045.7,755.0 L1042.7,760.5 L1039.6,765.9 L1036.5,771.3 L1033.4,776.7 L1030.2,782.1 L1026.9,787.4 L1023.7,792.7 L1020.3,798.0 L1017.0,803.3 L1013.6,808.5 L1010.1,813.7 L1006.6,818.8 L1003.1,824.0 L999.5,829.1 L995.9,834.2 L992.3,839.2 L988.6,844.2 L984.9,849.2 L981.2,854.1 L977.4,859.1 L973.5,864.0" stroke="#9467bd"/>
<linearGradient id="pk" gradientUnits="userSpaceOnUse" x1="868" y1="0" x2="886" y2="0"><stop offset="0" stop-color="#bc6c94"/><stop offset="1" stop-color="#bc6c94" stop-opacity="0"/></linearGradient>
<path d="M818.9,90H886" stroke="url(#pk)"/>
</g>
<path d="M1501.9,792.5L1528.4,819.0" stroke="#1f77b4" stroke-width="1.9" fill="none"/>
<path d="M1531.9,822.5L1523.3,819.0L1528.4,813.9Z" fill="#1f77b4"/>
<rect x="1451.8" y="785.0" width="100.3" height="15" fill="#1f77b4"/>
<text x="1501.9" y="796.0" font-size="9.6" fill="#fff" text-anchor="middle">Miss, timeout: 22.0s</text>
<path d="M1512.5,856.4L1539.0,882.9" stroke="#ff7f0e" stroke-width="1.9" fill="none"/>
<path d="M1542.5,886.4L1533.9,882.9L1539.0,877.8Z" fill="#ff7f0e"/>
<rect x="1462.3" y="848.9" width="100.3" height="15" fill="#ff7f0e"/>
<text x="1512.5" y="859.9" font-size="9.6" fill="#fff" text-anchor="middle">Miss, timeout: 22.0s</text>
<path d="M1070.5,895.5L1097.0,922.0" stroke="#2ca02c" stroke-width="1.9" fill="none"/>
<path d="M1100.5,925.5L1091.9,922.0L1097.0,916.9Z" fill="#2ca02c"/>
<rect x="1020.4" y="888.0" width="100.3" height="15" fill="#2ca02c"/>
<text x="1070.5" y="899.0" font-size="9.6" fill="#fff" text-anchor="middle">Miss, timeout: 22.0s</text>
<path d="M949.0,759.4L975.5,785.9" stroke="#d62728" stroke-width="1.9" fill="none"/>
<path d="M979.0,789.4L970.4,785.9L975.5,780.8Z" fill="#d62728"/>
<rect x="898.9" y="751.9" width="100.3" height="15" fill="#d62728"/>
<text x="949.0" y="762.9" font-size="9.6" fill="#fff" text-anchor="middle">Miss, timeout: 22.0s</text>
<path d="M943.6,834.0L970.1,860.5" stroke="#9467bd" stroke-width="1.9" fill="none"/>
<path d="M973.6,864.0L965.0,860.5L970.1,855.4Z" fill="#9467bd"/>
<rect x="893.0" y="826.5" width="100.3" height="15" fill="#9467bd"/>
<text x="943.1" y="837.5" font-size="9.6" fill="#fff" text-anchor="middle">Miss, timeout: 20.0s</text>
<path d="M1695.8,100.3H1718.6" stroke="#a4a4a4" stroke-width="1.7" stroke-dasharray="7 6.5"/>
<text x="1722.4" y="104.1" font-size="9.6" fill="#fff">Target</text>
<path d="M1695.8,114.6H1718.6" stroke="#1f77b4" stroke-width="1.7"/>
<text x="1722.4" y="118.4" font-size="9.6" fill="#fff">AIM-4F</text>
<path d="M1695.8,129.0H1718.6" stroke="#ff7f0e" stroke-width="1.7"/>
<text x="1722.4" y="132.8" font-size="9.6" fill="#fff">thrust_aim4f_falcon [C]</text>
<path d="M1695.8,143.3H1718.6" stroke="#2ca02c" stroke-width="1.7"/>
<text x="1722.4" y="147.1" font-size="9.6" fill="#fff">single_plane_aim4f_falcon [C]</text>
<path d="M1695.8,157.4H1718.6" stroke="#d62728" stroke-width="1.7"/>
<text x="1722.4" y="161.2" font-size="9.6" fill="#fff">dual_plane_aim4f_falcon [C]</text>
<path d="M1695.8,171.6H1718.6" stroke="#9467bd" stroke-width="1.7"/>
<text x="1722.4" y="175.4" font-size="9.6" fill="#fff">Aim-4E_falcon [C]</text>
</svg>
<div class="b" style="left:360px;top:80px;width:24px;height:24px;background:#1976d2;border-radius:2px;box-shadow:0 1px 3px rgba(0,0,0,.5)"></div>
<svg class="b" style="left:360px;top:80px" width="24" height="24" viewBox="360 80 24 24"><path fill="none" stroke="#fff" stroke-width="1.9" d="M375.9,88.3L371.2,91.7L375.9,95.1"/></svg>
</body></html>
